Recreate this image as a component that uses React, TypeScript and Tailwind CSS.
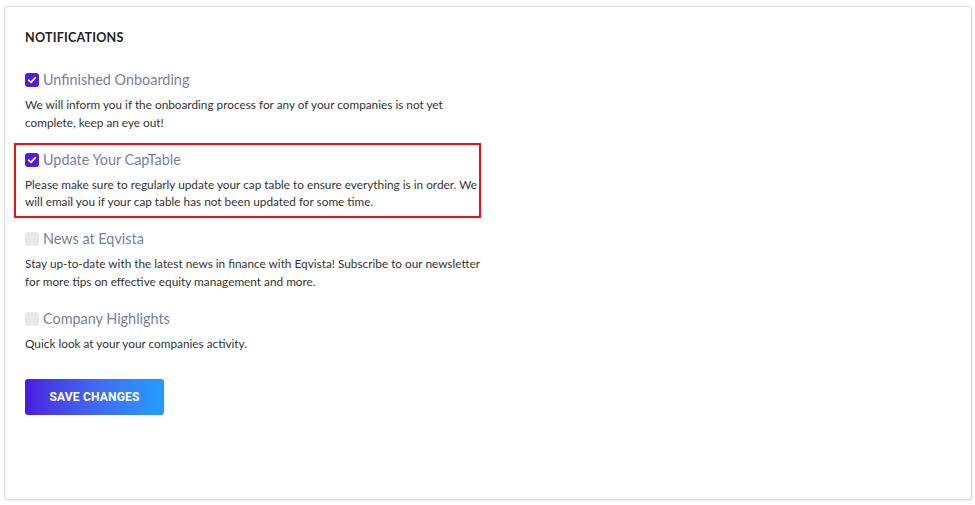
import React from "react";

type Pref = {
  title: string;
  text: string;
  checked: boolean;
  highlighted?: boolean;
};

const prefs: Pref[] = [
  {
    title: "Unfinished Onboarding",
    text: "We will inform you if the onboarding process for any of your companies is not yet complete, keep an eye out!",
    checked: true,
  },
  {
    title: "Update Your CapTable",
    text: "Please make sure to regularly update your cap table to ensure everything is in order. We will email you if your cap table has not been updated for some time.",
    checked: true,
    highlighted: true,
  },
  {
    title: "News at Eqvista",
    text: "Stay up-to-date with the latest news in finance with Eqvista! Subscribe to our newsletter for more tips on effective equity management and more.",
    checked: false,
  },
  {
    title: "Company Highlights",
    text: "Quick look at your your companies activity.",
    checked: false,
  },
];

function Box({ checked }: { checked: boolean }) {
  if (!checked) {
    return <span className="block w-[14px] h-[14px] rounded-[3px] bg-[#e8e8ec]" />;
  }
  return (
    <span className="flex items-center justify-center w-[14px] h-[14px] rounded-[3px] bg-[#4f1fdc]">
      <svg width="10" height="10" viewBox="0 0 10 10" fill="none">
        <path d="M1.6 5.2 L4 7.4 L8.4 2.6" stroke="#fff" strokeWidth="1.6" strokeLinecap="round" strokeLinejoin="round" />
      </svg>
    </span>
  );
}

function PrefItem({ p }: { p: Pref }) {
  return (
    <div className="relative">
      {p.highlighted && (
        <div className="pointer-events-none absolute -left-[11px] -top-[7px] w-[467px] h-[75px] border-2 border-[#e8121c]" />
      )}
      <label className="flex items-center h-[20px] gap-[4px]">
        <Box checked={p.checked} />
        <span className="text-[14.4px] text-[#7a809c] leading-[20px]">{p.title}</span>
      </label>
      <p className="mt-[6px] w-[462px] text-[11.8px] leading-[17.5px] text-[#333]">{p.text}</p>
    </div>
  );
}

export default function App() {
  return (
    <div className="w-[975px] h-[505px] bg-white pt-[6px] pl-[4px]" style={{ fontFamily: "Lato, 'Open Sans', sans-serif" }}>
      <div className="w-[968px] h-[494px] rounded-[3px] border border-[#dcdcdc] bg-white shadow-[1px_1px_1px_rgba(0,0,0,0.08)] pt-[23px] pl-[20px]">
        <h2 className="text-[12.6px] font-bold leading-[16px] text-[#222] tracking-[0.2px]">NOTIFICATIONS</h2>
        <div className="mt-[24px] flex flex-col gap-[18.5px]">
          {prefs.map((p) => (
            <PrefItem key={p.title} p={p} />
          ))}
        </div>
        <button
          className="mt-[27px] w-[139px] h-[36px] rounded-[3px] bg-gradient-to-r from-[#4a17e0] to-[#1e9eff] text-white text-[12px] font-bold tracking-[0.2px]"
          style={{ fontFamily: "Roboto, sans-serif" }}
        >
          SAVE CHANGES
        </button>
      </div>
    </div>
  );
}
